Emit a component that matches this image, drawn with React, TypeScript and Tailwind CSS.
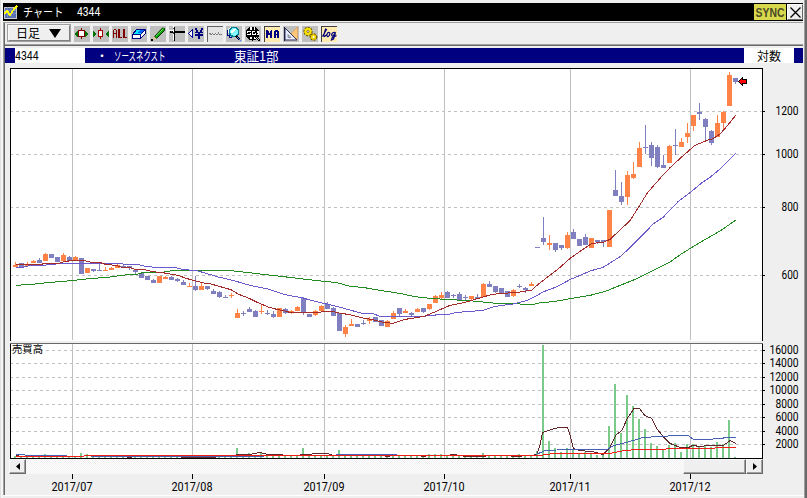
import React from "react";

type Candle = [up: 0 | 1, high: number, top: number, bottom: number, low: number];
type Run = [x1: number, x2: number, y: number];

const FIRST_X = 15;
const STEP = 6;

// One entry per trading day: up flag, wick top, body top, body bottom, wick bottom.
const candles: Candle[] = [
  [1, 262, 265, 267, 267], [0, 263, 263, 267, 267], [1, 262, 264, 266, 266], [1, 260, 261, 263, 263],
  [0, 258, 260, 263, 263], [1, 253, 254, 261, 261], [0, 254, 254, 258, 258], [0, 257, 257, 262, 262],
  [1, 253, 255, 261, 261], [0, 256, 257, 261, 261], [1, 256, 257, 260, 260], [0, 258, 258, 274, 274],
  [1, 268, 268, 273, 273], [0, 269, 269, 271, 272], [0, 263, 270, 271, 271], [1, 267, 270, 271, 271],
  [1, 267, 268, 270, 270], [1, 263, 265, 268, 268], [0, 265, 266, 268, 268], [0, 266, 266, 268, 270],
  [0, 270, 270, 272, 274], [0, 272, 273, 278, 278], [0, 276, 276, 280, 280], [0, 279, 280, 283, 283],
  [1, 276, 276, 283, 283], [1, 276, 277, 279, 279], [0, 276, 277, 280, 280], [0, 278, 279, 281, 282],
  [0, 280, 282, 285, 285], [1, 283, 286, 287, 287], [0, 276, 286, 290, 291], [1, 283, 286, 290, 290],
  [0, 286, 286, 289, 290], [0, 289, 291, 294, 294], [0, 291, 292, 297, 298], [0, 295, 297, 298, 298],
  [1, 293, 295, 296, 298], [1, 309, 313, 318, 318], [0, 311, 313, 314, 316], [0, 307, 309, 312, 312],
  [0, 310, 311, 317, 317], [1, 305, 311, 312, 314], [0, 310, 313, 314, 315], [0, 311, 314, 317, 318],
  [1, 308, 308, 317, 317], [0, 308, 309, 313, 314], [1, 310, 311, 313, 314], [1, 306, 307, 311, 311],
  [0, 297, 298, 312, 315], [0, 314, 314, 317, 317], [1, 310, 311, 315, 316], [1, 305, 306, 311, 311],
  [0, 302, 304, 309, 309], [0, 307, 308, 316, 316], [0, 313, 313, 331, 331], [1, 325, 327, 334, 337],
  [1, 319, 324, 326, 326], [0, 324, 324, 327, 327], [0, 320, 323, 324, 325], [1, 317, 319, 321, 324],
  [0, 317, 317, 322, 322], [0, 320, 320, 326, 326], [1, 320, 321, 327, 327], [1, 311, 313, 319, 319],
  [0, 308, 308, 314, 316], [1, 309, 311, 313, 313], [0, 312, 313, 315, 316], [1, 308, 309, 312, 312],
  [0, 308, 308, 312, 313], [1, 304, 304, 309, 310], [1, 295, 296, 303, 303], [1, 292, 295, 298, 299],
  [0, 291, 292, 298, 298], [0, 294, 295, 296, 298], [0, 292, 294, 300, 300], [0, 295, 297, 298, 301],
  [1, 296, 296, 299, 301], [0, 294, 297, 299, 299], [1, 283, 284, 297, 297], [0, 281, 284, 287, 287],
  [0, 286, 286, 292, 293], [0, 288, 288, 294, 294], [0, 291, 291, 297, 297], [1, 289, 290, 296, 297],
  [0, 284, 286, 287, 288], [0, 287, 288, 290, 293], [1, 282, 284, 286, 286], [0, 247, 247, 248, 248],
  [0, 217, 238, 242, 245], [1, 235, 243, 245, 250], [0, 243, 243, 250, 252], [0, 245, 245, 248, 250],
  [1, 232, 235, 248, 249], [0, 229, 232, 239, 239], [0, 239, 239, 246, 246], [0, 234, 237, 245, 245],
  [1, 238, 238, 248, 248], [0, 240, 240, 242, 244], [0, 240, 240, 242, 247], [1, 210, 210, 247, 247],
  [0, 170, 190, 196, 196], [0, 182, 196, 202, 205], [1, 171, 175, 197, 205], [1, 162, 174, 178, 179],
  [1, 142, 148, 167, 167], [0, 125, 147, 148, 154], [0, 142, 145, 158, 166], [0, 145, 147, 167, 168],
  [0, 155, 165, 168, 168], [1, 145, 146, 163, 163], [0, 129, 145, 146, 155], [1, 138, 142, 147, 147],
  [1, 123, 133, 137, 143], [1, 115, 115, 126, 131], [0, 103, 112, 114, 120], [0, 118, 119, 127, 141],
  [0, 130, 131, 143, 145], [1, 115, 123, 137, 137], [1, 111, 112, 123, 129], [1, 72, 75, 106, 106],
  [0, 78, 78, 82, 84],
];

// Tops of the volume bars that rise above the usual two pixels.
const volumeTops: Record<number, number> = {
  5: 454, 11: 453, 12: 454, 37: 448, 39: 453, 41: 452, 42: 454, 48: 448, 54: 450,
  69: 454, 70: 454, 71: 454, 78: 453, 84: 454, 87: 451, 88: 345, 89: 441, 90: 448, 91: 452,
  92: 448, 93: 449, 94: 453, 95: 452, 96: 454, 97: 455, 98: 454, 99: 426, 100: 384, 101: 433,
  102: 395, 103: 406, 104: 419, 105: 429, 106: 443, 107: 446, 108: 450, 109: 445, 110: 443,
  111: 452, 112: 444, 113: 444, 114: 446, 115: 445, 116: 447, 117: 442, 118: 444, 119: 420, 120: 457,
};

const shortMA =
  "16,264.5 42,264.5 43,263.5 59,263.5 62,262.3 71,260.5 84,260.5 91,262.3 100,262.5 106,264.5 117,265.5 121,267 130,267.5 135,269.4 145,269.6 152,271.6 162,272.6 168,273.6 178,275.4 187,278.6 197,281.4 204,283 210,283.7 220,286.6 231,289.7 238,294 250,298.7 255,301.3 268,307 277,309.4 285,311 292,313 317,312.4 327,311.4 333,311.4 337,312.7 350,314.7 363,318 373,319.7 382,322 393,323.4 405,319.4 418,317.4 425,316 430,314 440,309.7 450,305.4 465,302.4 475,299.4 490,295 500,293.4 517,292.6 532,290 538,284.4 548,276.7 557,270 570,258.4 580,251.4 592,243.4 603,242.4 610,239.4 620,230 630,220.7 635,212.7 640,205 647,193.4 660,178.4 670,167.7 682,156.7 695,145.4 707,140.4 713,138.6 720,134 725,128.5 736,115";
const midMA =
  "16,267.4 23,267.4 30,265.4 42,265.4 60,263.6 107,263.6 138,264.4 145,266.4 157,267.4 175,267.4 182,269.4 197,270.7 210,274.5 217,276.7 233,280.4 250,285.4 267,288.7 285,294.7 303,298 315,301.4 333,305.4 350,310 362,313.4 373,313.6 380,316.4 425,316.4 427,315.6 450,314 457,312.4 483,310.4 495,306.4 513,304 527,300.4 533,297.7 543,292 557,286.7 570,279.6 580,275.4 590,271 603,267.4 620,256.7 630,247.7 645,232.7 653,224 663,217.4 678,201.7 690,192.7 702,182.7 710,177.4 720,169 736,153";
const longMA =
  "16,285.4 35,284 50,282.4 72,280.6 90,278.6 107,277.4 127,274.7 138,274 143,272.6 162,272.4 173,270.5 229,270.5 240,271.6 260,274 273,275.4 300,278.6 315,280.4 337,282.6 350,286.4 363,287.4 380,290.4 400,293.4 410,295.7 423,297.7 440,299 473,301 493,303 510,303.7 533,304.4 540,302.7 553,301.7 570,298.7 590,295.4 605,291.5 620,285.4 635,279.4 652,271 670,262 682,253.5 700,242.5 720,231 736,220";

// Until late October the volume averages run flat along the base line.
const volShortRuns: Run[] = [
  [16, 19, 455], [127, 132, 457], [181, 216, 457], [236, 252, 454], [252, 257, 453], [257, 262, 452],
  [262, 266, 453], [266, 283, 454], [300, 312, 454], [312, 329, 453], [329, 332, 454],
  [385, 390, 456], [421, 426, 456], [450, 457, 454], [463, 486, 456], [511, 522, 456],
];
const volMidRuns: Run[] = [[16, 25, 454], [25, 67, 455], [91, 264, 456], [336, 397, 454]];
const volLongRuns: Run[] = [[16, 84, 456], [84, 541, 455]];

const volShort =
  "534,454.5 537,454 540,445 542.6,432.4 550,430 558,427.6 567.5,427.4 570,435 573.4,448.4 580,450.7 592,451.4 603,454.4 609.4,448.4 616,435 621.7,430.7 627.7,417.7 634,408.6 639.4,408.4 645,415.7 651.7,418.4 656.7,428.4 663.4,437 670,443.4 680,447.4 688.4,447.6 693.4,445 698.4,446.6 710,445.4 723.4,445.4 730,440.7 736,443.4";
const volMid =
  "536,454.5 545,450.7 565,449.5 607,449.5 613.4,445.7 626.7,442.4 643.4,437.4 663.4,436.4 673.4,435.5 688.4,435.6 693.4,439.4 713.4,439 726.7,437.7 736,437.4";
const volLong =
  "540,455.5 553.4,453.5 610,453.4 623.4,450.7 636.7,449.5 663,449.5 668.4,448.5 713.4,448.5 717,447.5 736,447.5";

const months = [
  { x: 72, label: "2017/07" },
  { x: 192, label: "2017/08" },
  { x: 324, label: "2017/09" },
  { x: 444, label: "2017/10" },
  { x: 570, label: "2017/11" },
  { x: 690, label: "2017/12" },
];
const priceLevels = [
  { y: 111, label: "1200" },
  { y: 154, label: "1000" },
  { y: 207, label: "800" },
  { y: 275, label: "600" },
];
const volumeLevels = [350, 363, 377, 390, 404, 417, 431, 444].map((y, i) => ({
  y,
  label: String(16000 - i * 2000),
}));

const labelClass = "fill-black font-['Roboto',sans-serif] text-[12px]";
const jp = "font-['Noto_Sans_CJK_JP',sans-serif]";

function AxisLabel({ right, baseline, text }: { right: number; baseline: number; text: string }) {
  const w = text.length * 6 - 1;
  return (
    <text className={labelClass} x={right - w} y={baseline} textLength={w} lengthAdjust="spacingAndGlyphs">
      {text}
    </text>
  );
}

function Runs({ runs, color }: { runs: Run[]; color: string }) {
  return (
    <g fill={color}>
      {runs.map(([x1, x2, y]) => (
        <rect key={x1} x={x1} y={y} width={x2 - x1} height="1" />
      ))}
    </g>
  );
}

function Chart() {
  return (
    <svg className="block h-[395px] w-[798px] shrink-0" viewBox="5 64 798 395" shapeRendering="crispEdges">
      <rect x="11" y="69" width="751" height="272" fill="#fff" />
      <rect x="11" y="344" width="751" height="114" fill="#fff" />
      <g fill="#c0c0c0">
        {months.map((m) => (
          <React.Fragment key={m.x}>
            <rect x={m.x} y="69" width="1" height="271" />
            <rect x={m.x} y="344" width="1" height="114" />
          </React.Fragment>
        ))}
      </g>
      <g stroke="#c0c0c0" strokeDasharray="3 3">
        {[...priceLevels, ...volumeLevels].map((l) => (
          <line key={l.y} x1="10" x2="762" y1={l.y + 0.5} y2={l.y + 0.5} />
        ))}
      </g>

      {candles.map(([up, high, top, bottom, low], i) => {
        const x = FIRST_X + i * STEP;
        return (
          <g key={i} fill={up ? "#ff8246" : "#8080c0"}>
            <rect x={x} y={high} width="1" height={low - high} />
            <rect x={x - 2} y={top} width="5" height={bottom - top} />
          </g>
        );
      })}
      <g fill="none">
        <polyline points={longMA} stroke="#228b22" />
        <polyline points={midMA} stroke="#6a5acd" />
        <polyline points={shortMA} stroke="#a52a2a" />
      </g>
      <path d="M738.5 81.5l4-4v2h4v4h-4v2z" fill="#f00" stroke="#000" />

      {candles.map((_, i) => {
        const top = volumeTops[i] ?? 456;
        return <rect key={i} x={FIRST_X - 1 + i * STEP} y={top} width="2" height={458 - top} fill="#7acb8a" />;
      })}
      <Runs runs={volMidRuns} color="#4860b4" />
      <Runs runs={volShortRuns} color="#602828" />
      <g fill="none">
        <polyline points={volShort} stroke="#602828" />
        <polyline points={volMid} stroke="#4860b4" />
        <polyline points={volLong} stroke="#f01e14" />
      </g>
      <Runs runs={volLongRuns} color="#f01e14" />

      <rect x="10" y="343" width="753" height="1" fill="#696969" />
      <g fill="#000">
        <rect x="10" y="68" width="753" height="1" />
        <rect x="10" y="68" width="1" height="273" />
        <rect x="762" y="68" width="1" height="273" />
        <rect x="10" y="344" width="1" height="115" />
        <rect x="762" y="344" width="1" height="115" />
        <rect x="10" y="458" width="753" height="1" />
        {[...priceLevels, ...volumeLevels].map((l) => (
          <rect key={l.y} x="763" y={l.y} width="2" height="1" />
        ))}
      </g>
      {[...priceLevels, ...volumeLevels].map((l) => (
        <AxisLabel key={l.y} right={798.5} baseline={l.y + 4} text={l.label} />
      ))}
      <text
        className="fill-black font-['Noto_Sans_CJK_JP',sans-serif] text-[10.5px]"
        x="12" y="353" textLength="31" lengthAdjust="spacingAndGlyphs"
      >
        売買高
      </text>
    </svg>
  );
}

function DateAxis() {
  return (
    <svg className="block h-[21px] w-[798px] shrink-0" viewBox="5 474 798 21" shapeRendering="crispEdges">
      {months.map((m) => (
        <g key={m.x}>
          <rect x={m.x} y="474" width="1" height="5" fill="#000" />
          <AxisLabel right={m.x + 20.5} baseline={491} text={m.label} />
        </g>
      ))}
    </svg>
  );
}

function Icon({ bg = "bg-[#c0c0c0]", children }: { bg?: string; children: React.ReactNode }) {
  return (
    <svg className={`block size-4 shrink-0 ${bg}`} viewBox="0 0 16 16" shapeRendering="crispEdges">
      {children}
    </svg>
  );
}

function Toolbar() {
  return (
    <div className="flex h-[21px] items-start pl-[2px] pt-px">
      <button
        className={`flex h-[18px] w-16 items-center border-2 border-t-[#f8f8f8] border-l-[#f8f8f8] border-r-[#808080] border-b-[#808080] bg-[#efefef] pl-[7px] text-[12px] leading-none outline outline-1 -outline-offset-1 outline-[#a0a0a0] ${jp}`}
      >
        <span>日足</span>
        <svg className="ml-[9px] h-[9px] w-[12px]" viewBox="0 0 12 9">
          <path d="M0 0h12L6 9z" />
        </svg>
      </button>
      <div className="ml-[3px] mt-[2px] flex gap-[3px]">
        <Icon>
          <path d="M1 7h1V6h1V5h1v6H3v-1H2V9H1zM14 7h-1V6h-1V5h-1v6h1v-1h1V9h1z" fill="#007000" />
          <path d="M7 2h1v11H7z" fill="#800000" />
          <rect x="4.500" y="4.500" width="6" height="6" fill="#fff" stroke="#800000" />
        </Icon>
        <Icon>
          <path d="M0 5h1v1h1v1h1v2H2v1H1v1H0zM16 5h-1v1h-1v1h-1v2h1v1h1v1h1z" fill="#007000" />
          <path d="M7 2h1v11H7z" fill="#a00000" />
          <rect x="5.500" y="4.500" width="4" height="6" fill="#fff" stroke="#a00000" />
        </Icon>
        <Icon>
          <path
            d="M1 4h1V3h2v1h1v8H4V8H2v4H1zM2 4h2v3H2zM6 3h2v8h2v1H6zM11 3h2v8h2v1h-4z"
            fill="#800000"
            fillRule="evenodd"
          />
        </Icon>
        <Icon>
          <path d="M5.500 3.500h9l-5 5h-8z" fill="#00e8ff" stroke="#000080" />
          <path d="M9 4h5l-3 3H7z" fill="#0060ff" />
          <path d="M1.500 8.500h8v4h-8zM9.500 8.500l5-5v4l-5 5z" fill="#fff" stroke="#000080" />
        </Icon>
        <Icon>
          <g shapeRendering="auto">
            <path d="M4.500 10.500L12.500 2l2 .5v2l-8 8z" fill="#10a010" stroke="#003800" />
            <path d="M6 10l7.500-7.500" stroke="#58e038" />
            <path d="M4 10.500l2.500 2L3 14.500l-1-.5z" fill="#d8c890" />
            <path d="M1 13h2v2H1z" fill="#000" />
          </g>
        </Icon>
        <Icon>
          <path d="M5 1h1v14H5zM1 5h15v2H1z" fill="#000" />
          <path d="M4 0h1v14H4zM0 4h5v1H0z" fill="#fff" />
          <path d="M4 6h1v2H4zM2 5h1v1H2zM4 2h1v1H4z" fill="#404040" />
        </Icon>
        <Icon>
          <path d="M.5 7.500l4-4v8z" fill="#fff" stroke="#0000a0" />
          <path d="M7 2h2v2h1v2h2V4h1V2h2v2h-1v2h1v1h-3v1h3v2h-3v3h-2v-3H7V8h3V7H7V6h1V4H7z" fill="#000080" />
        </Icon>
        <Icon bg="bg-[#e4e4e4]">
          <path d="M0 0h16v1H1v15H0z" fill="#606060" />
          <path d="M2 7h2v1h1V7h1v1h2V7h1v1h2V6h1v2h3v1h-3V8h-1v1H9V8H8v1H6V8H5v1H3V8H2z" fill="#808080" />
        </Icon>
        <Icon>
          <path d="M1 4l3-3h7l2 3v5l-3 2H5z" fill="#fff" />
          <circle cx="8" cy="6" r="4.500" fill="#80f8ff" stroke="#008090" strokeWidth="1.500" />
          <path d="M5 5l2-2h3L6 8z" fill="#fff" />
          <path d="M1 4v5h2v2h3" fill="none" stroke="#000080" />
          <path d="M10 10l4 4" stroke="#000" strokeWidth="2.500" />
          <path d="M11 11l4 4" stroke="#4080ff" />
        </Icon>
        <Icon>
          <circle cx="7.500" cy="7.500" r="7" fill="#000" />
          <path d="M5 1h2v3H5zM9 1h1v3H9zM2 5h4v1H3v1h3v2H2V8h3V7H2zM7 5h3v1H8v2h2V7h1v2H7zM12 5h2v4h-2V8h1V7h-1zM5 11h2v2H5zM9 11h2v2H9z" fill="#fff" />
          <path d="M10 10l5 5" stroke="#000" strokeWidth="2" />
          <path d="M11 11l3 3" stroke="#d0d0d0" />
        </Icon>
        <Icon bg="bg-[#ffeab0]">
          <path d="M0 0h16v1H1v15H0z" fill="#404040" />
          <path d="M2 4h2v1h1v2h1V5h1V4h1v8H6V9H4v3H2zM10 5h1V4h3v1h1v7h-2V9h-1v3h-2zM12 6v2h1V6z" fill="#000080" fillRule="evenodd" />
        </Icon>
        <Icon>
          <g shapeRendering="auto">
            <path d="M3 13L14.500 1v12z" fill="#ffc878" stroke="#d89040" strokeWidth=".6" />
            <path d="M2 2l12 12H2z" fill="#e8ecff" stroke="#303058" />
            <path d="M5 8.500v3h3z" fill="#c0c0c0" stroke="#606080" strokeWidth=".6" />
          </g>
          <path d="M1 1v14h1V1z" fill="#202040" />
        </Icon>
        <Icon>
          <g shapeRendering="auto">
            <circle cx="6" cy="5.500" r="4" fill="#ffe800" stroke="#705c00" strokeDasharray="2 1" strokeWidth="1.300" />
            <circle cx="6" cy="5.500" r="3.400" fill="#ffe800" />
            <circle cx="11.500" cy="11" r="3.200" fill="#e8c800" stroke="#705c00" strokeDasharray="2 1" strokeWidth="1.300" />
            <circle cx="11.500" cy="11" r="2.600" fill="#f0d400" />
            <circle cx="6" cy="5.500" r="1.300" fill="#c0c0c0" stroke="#806800" strokeWidth=".6" />
            <circle cx="11.500" cy="11" r="1" fill="#fff" />
          </g>
        </Icon>
        <Icon bg="bg-[#ffeab0]">
          <path d="M0 0h16v1H1v15H0z" fill="#404040" />
          <g fill="none" stroke="#000080" strokeWidth="1.200" shapeRendering="auto">
            <path d="M1.500 10.500L5.500 3.500 4.500 3 2.500 10l1 .5L6 8.500C6.500 5.500 10 6 8.500 9S5.500 10.500 6 8.500M14.500 6.500C10.500 5.500 9.500 10.500 12 10l2.500-3.500-2 6.500-2 1 .5-2 4.500-2.500" />
          </g>
        </Icon>
      </div>
    </div>
  );
}

function TitleBar() {
  return (
    <div className={`flex h-[18px] w-[800px] bg-black text-white ${jp}`}>
      <svg className="mt-[2px] h-[14px] w-4" viewBox="0 0 16 14" shapeRendering="crispEdges">
        <path d="M1 2h12v11H1z" fill="#5870b0" stroke="#c8c8d0" />
        <path d="M1 5h12M1 8h12M4 2v10M8 2v10" stroke="#88a0d0" strokeWidth=".6" />
        <path d="M1 9l3-3 3 4 4-6 3-3" fill="none" stroke="#ff0" strokeWidth="1.800" />
      </svg>
      <div className="flex items-center pl-1 text-[12px] leading-[18px]">
        <span className="w-[54px]"><span className="inline-block origin-left scale-x-[.84]">チャート</span></span>
        <span className="inline-block origin-left scale-x-[.86] font-['Roboto',sans-serif] text-[12px]">4344</span>
      </div>
      <div className="ml-auto flex pt-px">
        <div className="flex h-4 w-[32px] items-center justify-center bg-[#d8d84c] font-['Liberation_Sans',sans-serif] text-[13px] font-bold leading-none text-[#484828]">
          <span className="scale-x-[.8]">SYNC</span>
        </div>
        <button className="ml-px flex h-4 w-4 items-center justify-center border border-t-white border-l-white border-r-[#696969] border-b-[#696969] bg-[#efefef]">
          <svg className="size-[11px]" viewBox="0 0 11 11"><path d="M.5 .5l10 10M10.500 .5l-10 10" stroke="#000" strokeWidth="1.300" /></svg>
        </button>
      </div>
    </div>
  );
}

const raised = "border border-t-[#f8f8f8] border-l-[#f8f8f8] border-r-[#696969] border-b-[#696969] bg-[#efefef] shadow-[inset_-1px_-1px_0_#a0a0a0]";

function ScrollBar() {
  return (
    <div className="ml-1 flex h-[15px] w-[754px] bg-[repeating-conic-gradient(#ffffff_0_25%,#f0f0f0_0_50%)] bg-[length:2px_2px]">
      <div className={`flex w-[17px] items-center justify-center ${raised}`}>
        <svg className="h-[7px] w-1" viewBox="0 0 4 7"><path d="M4 0v7L0 3.500z" /></svg>
      </div>
      <div className={`ml-auto w-[63px] ${raised}`} />
      <div className={`flex w-[17px] items-center justify-center ${raised}`}>
        <svg className="h-[7px] w-1" viewBox="0 0 4 7"><path d="M0 0v7l4-3.500z" /></svg>
      </div>
    </div>
  );
}

function InfoBar() {
  return (
    <div className={`flex h-[15px] w-[798px] bg-[#000080] pl-[10px] text-[12px] leading-[15px] text-white ${jp}`}>
      <div className="w-[70px] bg-white font-['Roboto',sans-serif] text-[12.5px] text-black">
        <span className="inline-block origin-left scale-x-[.84]">4344</span>
      </div>
      <span className="w-[29px] pl-[11px]">・</span>
      <span className="w-[120px]"><span className="inline-block origin-left scale-x-[.62]">ソースネクスト</span></span>
      <span><span className="inline-block origin-left scale-x-[.96] text-[13px]">東証1部</span></span>
      <div className="ml-auto mr-[9px] w-[50px] bg-white pl-[13px] text-black">対数</div>
    </div>
  );
}

export default function App() {
  return (
    <div className="flex h-[498px] w-[807px] overflow-hidden bg-[#efefef]">
      <div className="w-[3px] border-l border-[#e0e0e0] bg-[#f6f6f6]" />
      <div className="flex w-[801px] flex-col pt-[3px]">
        <TitleBar />
        <div className="mt-px flex h-[473px] w-[800px] flex-col border-l border-t border-[#a0a0a0]">
          <div className="flex h-[472px] flex-col border-l border-[#696969]">
            <Toolbar />
            <div className="h-[2px] w-[798px] border-b border-[#696969] bg-[#a0a0a0]" />
            <div className="mt-[2px]"><InfoBar /></div>
            <div className="mt-px"><Chart /></div>
            <ScrollBar />
            <DateAxis />
          </div>
        </div>
        <div className="h-px bg-white" />
      </div>
      <div className="w-px bg-[#a0a0a0]" />
      <div className="w-[2px] bg-[#696969]" />
    </div>
  );
}
